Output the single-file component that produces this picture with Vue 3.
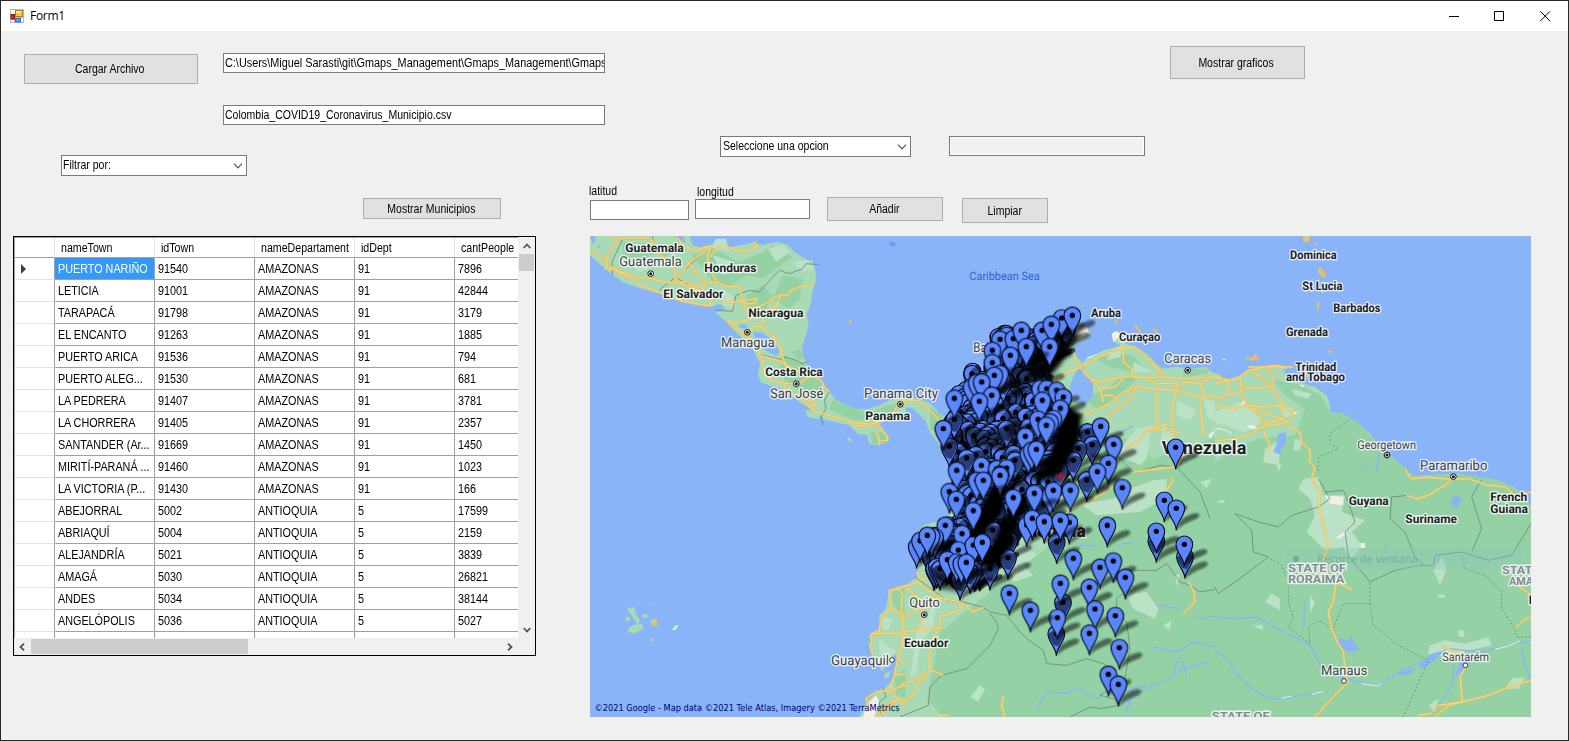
<script setup>
const columns = ['nameTown', 'idTown', 'nameDepartament', 'idDept', 'cantPeople']
const rows = [
  ['PUERTO NARIÑO', '91540', 'AMAZONAS', '91', '7896'],
  ['LETICIA', '91001', 'AMAZONAS', '91', '42844'],
  ['TARAPACÁ', '91798', 'AMAZONAS', '91', '3179'],
  ['EL ENCANTO', '91263', 'AMAZONAS', '91', '1885'],
  ['PUERTO ARICA', '91536', 'AMAZONAS', '91', '794'],
  ['PUERTO ALEG...', '91530', 'AMAZONAS', '91', '681'],
  ['LA PEDRERA', '91407', 'AMAZONAS', '91', '3781'],
  ['LA CHORRERA', '91405', 'AMAZONAS', '91', '2357'],
  ['SANTANDER (Ar...', '91669', 'AMAZONAS', '91', '1450'],
  ['MIRITÍ-PARANÁ ...', '91460', 'AMAZONAS', '91', '1023'],
  ['LA VICTORIA (P...', '91430', 'AMAZONAS', '91', '166'],
  ['ABEJORRAL', '5002', 'ANTIOQUIA', '5', '17599'],
  ['ABRIAQUÍ', '5004', 'ANTIOQUIA', '5', '2159'],
  ['ALEJANDRÍA', '5021', 'ANTIOQUIA', '5', '3839'],
  ['AMAGÁ', '5030', 'ANTIOQUIA', '5', '26821'],
  ['ANDES', '5034', 'ANTIOQUIA', '5', '38144'],
  ['ANGELÓPOLIS', '5036', 'ANTIOQUIA', '5', '5027'],
]

// Map geometry is kept in thirds of a pixel, in three sheets: west, centre, east.
const westRoads = [
  'M12 50L50 80 75 105 105 120 150 135 195 140 240 150 290 155 340 175 375 200 372 222 330 215 280 205 225 182 175 165 130 135 80 112 55 110',
  'M75 12L95 25 80 45 62 75 65 105', 'M95 20H195M195 20L215 60 245 85 265 110 270 150 300 150 330 165 360 155 395 150',
  'M270 12L290 40 325 55 372 42 355 60 310 92 290 120 270 140', 'M372 42L365 75 370 110 395 150 420 162 460 165 470 200 478 235 505 250',
  'M372 75L395 45 435 48 480 60 515 42 505 28', 'M310 95L330 125 360 150 350 175 370 205',
  'M410 210L440 212 475 205 515 200 505 215 475 215', 'M500 230L540 215 560 200 585 188 605 192 615 175 640 165 680 160',
  'M585 190L570 225 530 240 530 270 520 280 495 290 485 310 520 360', 'M425 265L445 275 475 265 495 262 500 230M425 265L445 290 460 295 485 320',
  'M510 283L530 285 550 305 570 320 585 350 590 375', 'M520 360L530 400 540 430 570 450 600 455 640 455 675 430 705 445 715 465 732 480',
  'M525 372L575 385 615 405 650 425M590 375L600 405M595 455V475L640 495 680 535 720 548 765 560 800 572 840 575 870 578',
  'M640 470L660 500 690 515 685 522 660 515', 'M865 570L905 615 905 625 880 628 875 608 868 600M880 628V636', 'M800 572L805 582 840 580 870 572 920 555 935 515 960 513',
]
const westSouthRoads = [
  'M960 1062L940 1068 910 1075 915 1100 912 1130 890 1150 880 1190 880 1205 855 1208 857 1225 852 1240 860 1270', 'M915 1075L940 1070 950 1090 945 1130 955 1160 950 1195 960 1210',
  'M912 1130L935 1140 950 1150', 'M860 1204H950L945 1250 935 1280 925 1330 910 1375', 'M850 1420L840 1400 870 1380 910 1375 960 1360', 'M910 1375L935 1400 910 1430 880 1450M870 1455L890 1425 940 1400 960 1420',
  'M935 1280L960 1295M925 1330L960 1325',
]
const centreRoads = [
  'M0 505L55 505 85 530 118 565', 'M455 455L490 425 540 407 600 372 670 348 705 345 750 385 790 435', 'M520 365L540 405 570 440 600 450 640 440 690 432 735 437 790 435 860 440 930 435 960 432',
  'M670 348L670 390 695 410 700 435M700 435L735 437 770 455 830 455 830 470 815 530 820 600 825 645', 'M545 555L580 535 620 520 670 480 710 462 740 470 830 475 900 495 960 490',
  'M620 555L650 530 690 500 710 462', 'M572 440L600 470 610 510M600 470L645 465 670 440M610 490L640 490 655 510', 'M770 480L770 590 735 600M770 590L820 600 840 600',
  'M700 720L780 710 825 705M825 705L850 670 910 655 960 640', 'M830 475L850 450 900 455 930 440M900 455L915 485 900 520 910 610M770 400L790 435', 'M680 648L715 625 735 600 780 580 810 575',
]
const eastRoads = [
  'M0 435L45 445 75 435 100 415 150 405 235 405M100 405H150L180 400 205 405', 'M0 455L45 445 35 490 0 500M35 490L80 480M75 435L80 480 95 520 125 540 150 575',
  'M0 520L50 530 95 520 150 525 205 518 235 545M95 520L150 545 200 560M75 455L100 470 170 465 200 515 205 560 145 578 150 610 165 640 158 665',
  'M110 420L140 435 165 465M150 405L175 430 175 465M0 625L60 622 110 605 145 580 200 575 225 565 235 535M205 560L225 585 255 600 260 630 285 655 285 690 300 710 290 740 315 780 312 830 325 880 340 940 315 1010 320 1040',
  'M345 1025L375 1055 410 1073M362 1055L355 1110 340 1140 350 1190 365 1225 385 1260 390 1310 398 1350 350 1400 300 1455',
  'M570 710L585 735 590 740 640 735 700 742 760 740 820 760 870 765 900 790 948 780M575 790L605 800 640 790 690 760 715 740',
  'M680 1242L710 1255 750 1270M750 1310L735 1330 742 1410 700 1420 660 1455M948 1345L880 1365 820 1390 742 1410 670 1420 645 1445 610 1450M900 1190L925 1165 948 1155M890 1050L915 1065 948 1088',
]
const colombiaRoads = [
  'M500 834L540 820 600 790 640 765', 'M800 775L820 745 810 735', 'M18 1062L50 1050 85 1075 130 1100 180 1110 220 1140 250 1126', 'M180 1110V1135L120 1155 120 1185',
  'M50 1020L60 1042 100 1040', 'M0 1165L20 1150 60 1130 90 1100 130 1100M10 1060L60 1100 70 1150 60 1200M0 1200L60 1195 120 1185 95 1225 85 1310 130 1330',
  'M85 1330L55 1350 40 1390 0 1415M0 1360L40 1345 85 1320', 'M310 1392L305 1420 315 1455M115 1450H145', 'M867 1050L882 1080 885 1110 850 1145',
]
const centreBorders = [
  'M655 675L700 720M710 720L780 700 830 705 900 780 930 860', 'M45 1035L100 1075 140 1105 190 1110 250 1126 270 1140 320 1150 360 1200 380 1220 430 1255 440 1295 500 1300 560 1280 610 1295 670 1340',
  'M270 1145L290 1170 295 1190 270 1240 200 1310 125 1330 90 1365 85 1420 0 1455', 'M678 1015H770L800 995 840 1050 870 1060 900 1080 960 1070', 'M650 1100L660 1090 710 1070 690 1060M650 1100V1140L680 1170 690 1250 675 1340 600 1390 640 1400 660 1420 600 1430 570 1425 510 1455',
]
const eastBorders = [
  'M60 845L130 870 190 885 230 850 310 825 345 800 310 740M60 845L110 895 115 960 160 975 60 1050 10 1085 0 1065', 'M330 780L385 775 400 810 420 870 390 900 400 970 465 1050 540 1015 610 1000 655 1000 660 970 740 960 820 985 890 970 948 875',
  'M580 790L530 795 525 860 570 900 600 975 625 1000', 'M800 742L770 795 800 890 770 960',
]
const eastDashes = [
  'M400 565L345 605 345 635 370 650 310 675 310 720', 'M165 980L200 1000 220 1050 220 1110 235 1160 220 1185 285 1235 280 1185 310 1165 355 1190 385 1115H465V1050', 'M465 1115L475 1180 550 1240 640 1285 565 1455',
  'M740 970L750 1010 810 1030 860 1080 860 1130 900 1190 905 1215 948 1215',
]
const rivers = [
  'M0 1155L60 1160 120 1155 170 1180 240 1215 285 1240 320 1310 390 1340 430 1350 490 1360 560 1315 620 1290 700 1250 800 1260 880 1240 948 1225',
  'M0 1255L35 1280 60 1320 110 1370 165 1400 215 1400 260 1390 325 1380', 'M720 1275L710 1360 665 1430M920 1250L930 1300 948 1345', 'M270 1110L265 1190M510 965L515 940M485 720L492 660M440 710L475 690',
]

const westLabels = [
  ['Guatemala', 118, 60, 175, 1], ['Guatemala', 100, 102, 187, 0], ['Honduras', 355, 120, 156, 1], ['El Salvador', 232, 198, 180, 1],
  ['Nicaragua', 487, 255, 165, 1], ['Managua', 405, 346, 161, 0], ['Costa Rica', 538, 432, 172, 1], ['San José', 552, 499, 160, 0],
  ['Panama City', 834, 499, 222, 0], ['Panama', 838, 564, 134, 1], ['Guayaquil', 735, 1299, 174, 0],
]
const centreLabels = [
  ['Aruba', 573, 254, 90, 1], ['Curaçao', 657, 326, 124, 1], ['Caracas', 793, 394, 140, 0], ['Ba', 220, 361, 40, 0],
  ['Quito', 28, 1125, 92, 0], ['Ecuador', 12, 1244, 133, 1],
]
const eastLabels = [
  ['Dominica', 225, 80, 140, 1], ['St Lucia', 262, 173, 120, 1], ['Barbados', 355, 239, 141, 1], ['Grenada', 213, 311, 126, 1],
  ['Trinidad', 241, 416, 123, 1], ['and Tobago', 213, 446, 177, 1], ['Georgetown', 427, 650, 176, 2], ['Paramaribo', 615, 715, 202, 0],
  ['Guyana', 401, 819, 120, 1], ['Suriname', 571, 873, 155, 1], ['French', 826, 807, 111, 1], ['Guiana', 826, 843, 113, 1],
  ['Manaus', 318, 1330, 139, 0], ['Santarém', 682, 1286, 140, 2],
]
const stateLabels = [
  ['STATE OF', 219, 1019, 174], ['RORAIMA', 219, 1053, 169], ['STATE OF', -10, 1464, 174], ['STATE', 861, 1027, 112], ['AMAPÁ', 882, 1059, 112],
]
const labelClass = (kind) => ['city', 'country', 'town'][kind]

const northernPins = [
  [485, 258], [517, 250], [320, 310], [300, 322], [340, 320], [364, 295], [426, 295], [454, 277], [277, 355], [449, 344], [331, 370],
  [379, 344], [277, 392], [300, 425], [283, 430], [215, 465], [230, 452], [245, 450], [163, 499], [275, 490], [238, 508],
  [420, 470], [440, 470], [470, 475], [490, 495], [427, 505], [130, 590], [481, 529], [414, 562], [460, 560], [450, 570], [439, 580],
  [376, 613], [385, 665], [395, 655], [409, 652], [244, 700],
  [290, 710], [320, 708], [302, 727], [602, 583], [641, 637], [625, 694], [592, 719], [827, 646],
]
const shadedPins = [
  [502, 287], [425, 410], [310, 450], [163, 562], [386, 585], [320, 590], [148, 643], [228, 668], [200, 678], [340, 665], [345, 685],
  [562, 600], [577, 638], [535, 650], [520, 685], [478, 715], [560, 744], [431, 815], [152, 937], [278, 894], [327, 925], [324, 977],
  [110, 1004], [120, 1010], [270, 1010], [210, 1020], [180, 1040], [470, 930], [769, 926], [855, 974], [489, 1111], [469, 1205],
]
const southernPins = [
  [170, 715], [230, 745], [300, 730], [250, 745], [148, 779], [169, 802], [220, 836], [340, 797], [450, 789], [460, 775], [403, 784],
  [511, 775], [667, 767], [136, 880], [186, 905], [50, 944], [60, 926], [105, 915], [95, 912], [82, 910], [175, 954],
  [220, 939], [247, 931], [380, 879], [397, 859], [433, 869], [508, 871], [481, 865],
  [142, 983], [170, 990], [184, 995], [199, 991], [793, 805], [829, 829], [622, 880],
  [769, 898], [853, 937], [520, 979], [600, 1006], [640, 987], [676, 1036], [481, 1054], [568, 1066], [585, 1131], [646, 1151],
  [472, 1157], [568, 1204], [658, 1247], [625, 1327], [655, 1357], [328, 1084], [391, 1135],
]

// Repeatable scatter for the densely populated band, row by row.
const bands = [
  [320, 295, 460], [350, 275, 440], [400, 265, 400], [440, 210, 400], [490, 170, 450], [540, 165, 460], [590, 150, 450], [640, 155, 470],
  [690, 165, 480], [735, 175, 450], [780, 180, 430], [830, 185, 370], [880, 140, 320], [930, 70, 300], [960, 60, 290], [995, 100, 240],
]
let seed = 41
const random = () => (seed = (seed * 16807) % 2147483647) / 2147483647
const densePins = bands.flatMap(([y, from, to]) =>
  Array.from({ length: Math.round((to - from) / 12) }, () => [
    Math.round(from + random() * (to - from)), Math.round(y + random() * 44 - 22),
  ]))
densePins.sort((a, b) => a[1] - b[1])
</script>

<template>
  <div class="window">
    <header class="titlebar">
      <svg class="app-icon" width="14" height="14" viewBox="0 0 14 14">
        <rect width="14" height="14" fill="#b9bcc0" />
        <path d="M1 1h4v4H1zM1 11h3v2H1zM11 9h2v4h-2z" fill="#fff" />
        <rect x="5.5" y="1.5" width="7" height="6" fill="#f7c62f" stroke="#b87b16" />
        <rect x="6" y="2" width="5" height="2" fill="#ffe88a" />
        <rect x="1" y="5.5" width="3.5" height="4.5" fill="#d02c26" stroke="#951313" />
        <rect x="5.5" y="9.5" width="5" height="3.5" fill="#5d9cf5" stroke="#2e6fd4" />
      </svg>
      <span class="title">Form1</span>
      <div class="window-buttons">
        <svg width="11" height="11" viewBox="0 0 11 11"><path d="M0 5.5h10" /></svg>
        <svg width="11" height="11" viewBox="0 0 11 11"><path d="M.5 .5h9v9h-9z" /></svg>
        <svg width="11" height="11" viewBox="0 0 11 11"><path d="M.3 .3l9.7 9.7M10 .3L.3 10" /></svg>
      </div>
    </header>

    <section class="files">
      <button class="btn load"><span class="sq">Cargar Archivo</span></button>
      <div class="paths">
        <div class="field"><span class="sq folder">C:\Users\Miguel Sarasti\git\Gmaps_Management\Gmaps_Management\Gmaps</span></div>
        <div class="field"><span class="sq">Colombia_COVID19_Coronavirus_Municipio.csv</span></div>
      </div>
      <button class="btn charts"><span class="sq">Mostrar graficos</span></button>
    </section>

    <main class="panels">
      <section class="left">
        <div class="select filter"><span class="sq">Filtrar por:</span><svg width="10" height="6" viewBox="0 0 10 6"><path d="M1 .7L5 4.800 9 .7" /></svg></div>
        <button class="btn towns"><span class="sq">Mostrar Municipios</span></button>
        <div class="grid">
          <div class="sheet">
            <div class="row head">
              <div class="stub"></div>
              <div v-for="c in columns" :key="c" class="cell"><span class="sq">{{ c }}</span></div>
            </div>
            <div v-for="(r, i) in rows" :key="r[1]" class="row">
              <div class="stub"><svg v-if="i === 0" width="5" height="10" viewBox="0 0 5 10"><path d="M0 0l5 5-5 5z" fill="#404040" /></svg></div>
              <div v-for="(v, j) in r" :key="j" class="cell" :class="{ selected: i === 0 && j === 0 }"><span class="sq">{{ v }}</span></div>
            </div>
            <div class="row"><div class="stub"></div><div v-for="c in columns" :key="c" class="cell"></div></div>
          </div>
          <div class="vbar">
            <svg width="8" height="6" viewBox="0 0 8 6"><path d="M.7 5L4 1.5 7.3 5" /></svg>
            <div class="vthumb"></div>
            <svg class="end" width="8" height="6" viewBox="0 0 8 6"><path d="M.7 1L4 4.5 7.3 1" /></svg>
          </div>
          <div class="hbar">
            <svg width="6" height="8" viewBox="0 0 6 8"><path d="M5 .7L1.5 4 5 7.3" /></svg>
            <div class="hthumb"></div>
            <svg class="end" width="6" height="8" viewBox="0 0 6 8"><path d="M1 .7L4.5 4 1 7.3" /></svg>
          </div>
        </div>
      </section>

      <section class="right">
        <div class="options">
          <div class="select option"><span class="sq">Seleccione una opcion</span><svg width="10" height="6" viewBox="0 0 10 6"><path d="M1 .7L5 4.800 9 .7" /></svg></div>
          <div class="field disabled"></div>
        </div>
        <div class="coords">
          <label class="coord lat"><span class="sq">latitud</span><span class="field"></span></label>
          <label class="coord lon"><span class="sq">longitud</span><span class="field"></span></label>
          <button class="btn add"><span class="sq">Añadir</span></button>
          <button class="btn clear"><span class="sq">Limpiar</span></button>
        </div>

        <svg class="map" width="941" height="481" viewBox="590 236 941 481">
          <defs>
            <filter id="soft" x="-30%" y="-30%" width="160%" height="160%"><feGaussianBlur stdDeviation="3.500" /></filter>
            <g id="pin">
              <path d="M0 66C2 55 9 43 14 35 34 20 50 13 64 15 75 21 67 31 50 36 34 42 17 50 0 66Z" fill="#000" opacity=".52" filter="url(#soft)" />
              <path d="M0 66C-1 40 -25 25 -25 0A25 25 0 0 1 25 0C25 25 1 40 0 66Z" fill="#5a86ff" stroke="#080c18" stroke-width="3.4" />
              <circle r="8" fill="#000" />
            </g>
            <g id="shaded-pin">
              <path d="M0 66C2 55 9 43 14 35 34 20 50 13 64 15 75 21 67 31 50 36 34 42 17 50 0 66Z" fill="#000" opacity=".5" filter="url(#soft)" />
              <path d="M0 66C-1 40 -25 25 -25 0A25 25 0 0 1 25 0C25 25 1 40 0 66Z" fill="#5a86ff" stroke="#080c18" stroke-width="3.4" />
              <path d="M-24 2C-10 -12 8 -20 24 -8 26 8 12 24 6 38L-8 34C-14 24 -22 14 -24 2Z" fill="#101a3c" opacity=".68" />
              <circle r="8" fill="#000" />
            </g>
            <g id="dense-pin">
              <path d="M0 66C2 55 9 43 14 35 34 20 50 13 64 15 75 21 67 31 50 36 34 42 17 50 0 66Z" fill="#000" opacity=".62" />
              <path d="M0 66C-1 40 -25 25 -25 0A25 25 0 0 1 25 0C25 25 1 40 0 66Z" fill="#2e4996" stroke="#03050d" stroke-width="4" />
              <path d="M-22 -8A24 24 0 0 1 12 -21C-4 -18 -12 2 -10 22 -18 12 -22 4 -22 -8Z" fill="#5a86ff" />
              <circle r="8" fill="#000" />
            </g>
            <g id="capital"><circle r="8.5" fill="#fff" stroke="#111" stroke-width="3" /><circle r="4.500" fill="#111" /></g>
            <g id="place"><circle r="7" fill="#fff" stroke="#333" stroke-width="3" /></g>
          </defs>
          <rect x="590" y="236" width="941" height="481" fill="#8ab4f8" />

          <g transform="translate(586 232) scale(.333333)">
            <path class="land" d="M12 12H262L285 25 300 35 290 12H310L320 40 345 46 375 37 400 48 450 42 500 32 530 39 575 30 605 38 625 60 665 85 680 85 690 125 688 155 680 175 675 215 662 250 668 280 658 315 648 345 652 375 662 395 690 430 715 465 735 485 750 505 775 515 800 530 840 532 880 520 905 508 960 490V545L915 560 880 575 905 610 908 625 880 640 850 636 845 610 815 605 790 580 720 565 700 550 700 562 665 555 658 535 680 535 640 510 600 480 570 465 525 452 515 425 523 395 512 375 500 350 470 320 440 290 420 270 388 240 405 236 420 235 402 215 375 225 330 220 280 208 220 185 160 168 110 150 75 125 40 95 12 70Z" />
            <path class="dark" d="M110 30L260 40 240 75 210 60 160 90 110 70ZM315 70L380 50 460 90 530 60 560 40 620 75 570 110 530 140 480 130 430 165 380 150 350 110ZM590 130L650 140 640 200 610 230 560 200ZM480 190L530 160 560 190 530 250 490 235ZM590 370L660 395 720 470 690 500 630 470 580 430ZM640 350L655 370 640 385 615 360ZM740 505L850 545 900 520 940 515 920 560 800 565 730 530ZM850 600H900V635H860Z" />
            <path class="pale" d="M545 50L590 38 610 60 570 90ZM620 90L665 85 685 110 650 120ZM130 95L170 80 190 110 160 120ZM380 70L430 85 460 110 410 130ZM405 170L440 190 450 225 410 220ZM230 35L255 60 210 55ZM420 20L390 20 375 45 430 60Z" />
            <path class="water" d="M500 300L530 302 560 325 582 360 570 372 530 350 510 325ZM460 275L485 280 480 292 460 285ZM12 12H28V28L20 35ZM35 35L45 45 38 50Z" />
            <path d="M910 30L932 34 925 42 912 43Z" fill="#669df6" />
            <path class="land" d="M785 615L795 620 798 632 785 625ZM125 1128L145 1125 148 1145 130 1145ZM133 1143L148 1143 162 1165 157 1178 145 1165ZM125 1190L145 1178 170 1175 172 1192 145 1205 128 1200ZM170 1147H185V1157H170ZM118 1155H132V1167H118ZM194 1218H201V1227H194ZM193 1110H198V1114H193ZM192 1165L210 1160 215 1182 200 1180Z" />
            <path d="M258 1195L268 1180 278 1180 268 1194Z" fill="#d4eed9" />
            <path class="land" d="M962 1058L935 1064 908 1075 905 1100 900 1130 880 1150 880 1190 850 1205 855 1240 862 1280 890 1318 915 1305 930 1285 920 1345 900 1365 870 1380 840 1410 820 1455H962Z" />
            <path class="dark" d="M910 1085L955 1065V1150L930 1130ZM925 1330L960 1310V1400L930 1390Z" />
            <path class="pale" d="M890 1155L920 1160 910 1190 890 1195ZM880 1220L930 1260 910 1280 880 1265Z" />
            <path d="M830 1455L845 1415 870 1390 880 1410 865 1455Z" fill="#f4f0e6" />
            <path class="water" d="M925 1265L938 1285 925 1320 905 1350 890 1365 900 1330 890 1310 915 1300Z" /><path class="land" d="M895 1325L912 1318 910 1335 895 1340Z" />
            <path class="border" d="M200 12V22H110L78 90 80 130M375 40L290 120 225 170 220 180M275 140L310 160 350 180 375 195M390 235L440 238 450 190 490 175 520 180 555 140 580 115 610 125 650 110 660 95 698 98M520 368L585 382 600 375 630 385 650 395 662 390M732 475L715 505 720 530 705 555 712 580M890 1365L900 1395 880 1410 885 1450" />
          </g>

          <g transform="translate(900 232) scale(.333333)">
            <path class="land" d="M0 490L40 498 85 510 120 545 150 565 180 500 260 400 290 335 400 315 520 265 560 285 572 300 570 312 545 326 520 345 522 360 545 392 565 380 600 360 650 345 662 340 640 330 635 305 650 297 665 310 680 335 705 343 740 365 770 395 785 410 830 405 870 410 920 405 935 420 965 432V1455H16V1059L45 1040 55 1030 52 1005 38 940 35 920 70 880 140 860 165 800 150 735 140 680 120 640 90 600 75 565 40 530 0 520Z" />
            <path class="dark" d="M500 440L515 530 580 580 700 630 760 680 965 610V1455H130L80 1400 120 1200 220 1120 500 900ZM90 525L130 555 120 610 90 590ZM590 380L640 365 700 370 740 420 690 420 630 405ZM550 500L620 470 670 430 710 440 650 500 590 530ZM850 410L930 410 920 425 850 435Z" />
            <path class="pale" d="M640 350L670 340 660 375 620 385ZM700 390L760 420 700 420ZM710 590L755 580 740 680 720 700 650 670 670 640ZM790 580L830 620 820 660 780 640ZM830 505L890 535 870 565 830 550ZM910 500L960 510 940 570 920 550ZM540 815L640 800 690 770 760 745 800 740 800 795 720 840 590 850ZM310 945L380 940 410 970 370 1000 400 1030 340 1050 320 1020ZM680 1090L740 1080 775 1130 765 1160 700 1130ZM790 1180L815 1165 808 1195ZM210 1395L240 1360 255 1370 235 1410ZM50 1195L110 1100 100 1180 60 1240 50 1320 30 1340ZM900 750L935 740 920 770ZM825 1030L840 1025 830 1065Z" />
            <path class="water" d="M540 402L552 402 548 425 562 435 580 455 578 495 548 522 525 507 508 465 520 435Z" />
            <path class="sand" d="M635 305L650 297 662 310 640 330ZM650 345L610 358 555 385 565 375ZM530 285L560 285 568 305 530 325ZM925 610L950 590 930 620Z" />
            <path class="road" d="M705 282L722 300M760 290L772 302M648 265L652 275" />
            <path class="river" d="M590 600L650 610 700 580M540 940H590M650 940L700 930M700 1365L680 1440M410 1430L440 1380 500 1385 530 1365 570 1390 600 1400M660 1420L740 1370 790 1350 850 1310 930 1290M640 1385L740 1360M760 1245L830 1260 880 1230 960 1250M820 1320L830 1290 850 1290 860 1330M690 1420L690 1390M770 1120L840 1130M890 1160L960 1150" />
            <path v-for="d in centreBorders" :key="d" class="border" :d="d" />
            <template v-for="d in centreRoads.concat(colombiaRoads)" :key="d"><path class="road" :d="d" /><path class="road-core" :d="d" /></template>
          </g>
          <g transform="translate(586 232) scale(.333333)">
            <template v-for="d in westRoads.concat(westSouthRoads)" :key="d"><path class="road" :d="d" /><path class="road-core" :d="d" /></template>
            <path class="road" d="M793 265V276M198 1182L210 1165 210 1180" />
          </g>

          <g transform="translate(1215 232) scale(.333333)">
            <path class="land" d="M0 434L45 442 75 430 100 413 150 405 235 402 205 415 215 428 245 448 280 460 300 465 335 490 345 520 345 540 385 545 400 560 430 572 465 605 490 640 520 665 550 690 580 720 595 732 680 727 735 725 800 738 850 744 900 769 930 789 948 825V1455H0Z" />
            <path class="dark" d="M175 445L265 458 320 495 345 540 385 545 430 572 490 640 550 690 595 732 735 725 850 744 930 789 948 825V1455H0V690L60 650 130 620 240 610 270 530 210 490Z" />
            <path class="pale" d="M0 540L75 510 110 530 140 570 90 600 0 570ZM180 515L235 530 215 560ZM230 470L290 485 280 500 240 490ZM150 650L200 620 190 700 145 690ZM240 620L260 625 255 655 235 655ZM265 740L310 735 325 790 390 790 380 840 450 865 410 900 440 940 410 985 385 945 330 955 275 900 300 850 285 800 250 770ZM170 1085L195 1100 195 1135 150 1110ZM680 975L695 1010 675 1060 655 1015ZM645 1240L690 1225 750 1235 820 1215 830 1240 740 1260 690 1275 640 1265ZM890 1340L930 1335 910 1370 870 1370ZM180 680L200 700 190 720ZM640 1420L670 1400 660 1440ZM730 1195H748V1215H730ZM670 1088H690V1097H670ZM110 1180L145 1180 140 1193ZM10 805H28V812H10ZM285 1090L300 1110 285 1145Z" />
            <path class="sand" d="M85 505L93 515 78 518ZM230 540L250 540 235 548ZM330 790L385 795 385 820 345 815ZM95 580L115 580 130 590 105 590ZM437 933H450V948H437ZM365 915L395 895 390 910 368 922ZM20 380L32 382 30 386ZM250 455L270 462 262 466Z" />
            <path class="water" d="M190 605L215 600 210 640 195 655 200 670 175 660 185 635ZM708 800L720 793 742 797 725 830 710 820ZM375 1218L400 1225 410 1210 415 1230 435 1255 400 1260 365 1235ZM610 1300L650 1265 690 1255 660 1285 625 1310ZM550 1320L600 1310 590 1325 550 1330ZM735 1290L770 1265 800 1275 750 1300 735 1330 720 1330ZM665 975L675 970 670 995Z" />
            <path v-for="d in rivers" :key="d" class="river" :d="d" />
            <path d="M0 590Q30 590 50 605M200 1400L230 1392M290 1387L325 1378M440 1355L490 1362 500 1352M840 1252L880 1242 915 1227" fill="none" stroke="#e5f2ea" stroke-width="3" />
            <path v-for="d in eastBorders" :key="d" class="border" :d="d" />
            <path v-for="d in eastDashes" :key="d" class="border dashed" :d="d" />
            <template v-for="d in eastRoads" :key="d"><path class="road" :d="d" /><path class="road-core" :d="d" /></template>
            <path class="land" d="M265 12H285V25L270 28ZM308 108L322 112 325 130 312 125ZM316 176L326 178 324 185ZM305 215L312 212 310 230ZM290 400L320 388 315 400Z" />
            <path class="road" d="M267 12L268 26 280 26 283 13M297 33L306 36M315 110L330 125 328 135 318 126ZM312 212L308 230M340 360L352 357M92 377L112 380 120 370 128 378 110 383M270 437L280 432" />
          </g>

          <g transform="translate(586 232) scale(.333333)">
            <text v-for="l in westLabels" :key="l[0] + l[2]" :class="labelClass(l[4])" :x="l[1]" :y="l[2]" :textLength="l[3]" lengthAdjust="spacingAndGlyphs">{{ l[0] }}</text>
            <use href="#capital" x="194" y="125" /><use href="#capital" x="484" y="301" /><use href="#capital" x="631" y="455" /><use href="#capital" x="943" y="517" /><use href="#place" x="918" y="1284" />
          </g>
          <g transform="translate(1215 232) scale(.333333)">
            <g class="ghost">
              <rect x="210" y="948" width="715" height="66" fill="#8ec6bd" opacity=".35" />
              <circle cx="243" cy="981" r="9" fill="#6baf89" />
              <text x="306" y="992" textLength="302" lengthAdjust="spacingAndGlyphs">Recorte de ventana</text>
            </g>
            <text v-for="l in eastLabels" :key="l[0]" :class="labelClass(l[4])" :x="l[1]" :y="l[2]" :textLength="l[3]" lengthAdjust="spacingAndGlyphs">{{ l[0] }}</text>
            <text v-for="l in stateLabels" :key="l[0] + l[1]" class="state" :x="l[1]" :y="l[2]" :textLength="l[3]" lengthAdjust="spacingAndGlyphs">{{ l[0] }}</text>
            <text class="country" x="941" y="1115">M</text>
            <use href="#capital" x="516" y="669" /><use href="#capital" x="715" y="734" /><use href="#place" x="387" y="1347" /><use href="#place" x="751" y="1300" />
          </g>
          <g transform="translate(900 232) scale(.333333)">
            <text v-for="l in centreLabels" :key="l[0]" :class="labelClass(l[4])" :x="l[1]" :y="l[2]" :textLength="l[3]" lengthAdjust="spacingAndGlyphs">{{ l[0] }}</text>
            <text class="sea" x="208" y="143" textLength="211" lengthAdjust="spacingAndGlyphs">Caribbean Sea</text>
            <text class="nation" x="785" y="667" textLength="254" lengthAdjust="spacingAndGlyphs">Venezuela</text>
            <text class="nation" x="335" y="914" textLength="222" lengthAdjust="spacingAndGlyphs">Colombia</text>
            <use href="#capital" x="863" y="415" /><use href="#capital" x="73" y="1148" />

            <path class="mass" d="M300 320L450 300 510 290 480 370 440 440 490 500 530 560 520 720 460 780 390 870 340 960 250 1060 160 1070 80 980 130 930 190 870 185 760 155 690 155 600 190 500 280 400Z" />
            <use v-for="(p, i) in densePins" :key="i" href="#dense-pin" :x="p[0]" :y="p[1]" />
            <use v-for="(p, i) in shadedPins" :key="'d' + i" href="#shaded-pin" :x="p[0]" :y="p[1]" />
            <g class="gloom">
              <path d="M545 300L505 355 480 400 440 445 395 440 380 400 405 350 470 345 510 310Z" opacity=".93" />
              <path d="M500 520L540 545 545 610 500 700 470 730 420 750 390 735 450 680 455 640 490 580Z" />
              <path d="M290 755L320 770 310 840 255 900 235 970 215 940 205 880 250 810Z" />
              <path d="M390 775L380 840 340 870 345 930 280 1010 235 1000 290 910 310 860 350 800Z" />
              <path d="M120 910L170 920 150 960 80 955ZM90 1010L200 1050 180 1080 120 1070ZM330 530L370 580 350 640 320 610ZM180 590L300 600 330 660 220 640ZM330 420L380 400 400 440 360 500 330 480Z" opacity=".6" />
            </g>
            <use v-for="(p, i) in northernPins" :key="'n' + i" href="#pin" :x="p[0]" :y="p[1]" />
            <use v-for="(p, i) in southernPins" :key="'s' + i" href="#pin" :x="p[0]" :y="p[1]" />
            <path d="M481 719V748M466 733.500H496" stroke="#f00" stroke-width="3.500" />
          </g>
          <text class="credit" x="594.500" y="711" textLength="305" lengthAdjust="spacingAndGlyphs">©2021 Google - Map data ©2021 Tele Atlas, Imagery ©2021 TerraMetrics</text>
        </svg>
      </section>
    </main>
  </div>
</template>

<style>
html, body { overflow: hidden; }
</style>

<style scoped>
.window { box-sizing: border-box; width: 1569px; height: 741px; border: 1px solid #2a2829; background: #f0f0f0; font: 12px/14px "Liberation Sans", sans-serif; color: #000; overflow: hidden; }
.titlebar { height: 30px; background: #fff; display: flex; align-items: center; padding-left: 9px; }
.title { margin-left: 6px; font: 12px/16px "Open Sans", sans-serif; letter-spacing: -.3px; }
.window-buttons { margin-left: auto; margin-right: 17px; display: flex; gap: 34px; }
.window-buttons svg { fill: none; stroke: #000; stroke-width: 1; }
.window-buttons svg:last-child { margin-left: 1px; }
.sq { display: inline-block; white-space: nowrap; transform: scaleX(.875); transform-origin: left center; }
.sq.folder { transform: scaleX(.905); }
.btn { box-sizing: border-box; padding: 0; border: 1px solid #adadad; background: #e1e1e1; font: inherit; color: inherit; display: flex; align-items: center; justify-content: center; flex: none; }
.btn .sq { transform-origin: center; }
.field { box-sizing: border-box; display: block; height: 20px; border: 1px solid #7a7a7a; background: #fff; padding: 2px 1px 0; flex: none; overflow: hidden; }
.select { box-sizing: border-box; height: 21px; border: 1px solid #7a7a7a; background: #fff; display: flex; align-items: center; justify-content: space-between; padding: 0 3px 1px 2px; flex: none; }
.select svg { fill: none; stroke: #555; stroke-width: 1.200; margin-top: 1px; }
.files { display: flex; align-items: flex-start; height: 99px; padding: 15px 0 0 23px; box-sizing: border-box; }
.load { width: 174px; height: 30px; margin-top: 8px; padding-right: 3px; }
.paths { width: 382px; margin: 7px 0 0 25px; display: flex; flex-direction: column; gap: 32px; }
.charts { width: 135px; height: 33px; margin-left: 565px; padding-right: 2px; }
.panels { display: flex; align-items: flex-start; }
.left { width: 589px; flex: none; }
.filter { width: 186px; margin: 25px 0 0 60px; padding-left: 1px; }
.towns { width: 138px; height: 21px; margin: 22px 0 0 362px; padding-right: 2px; }

.grid { box-sizing: border-box; width: 523px; height: 420px; margin: 17px 0 0 12px; border: 1px solid #000; background: #f0f0f0; display: grid; grid-template-columns: 504px 17px; grid-template-rows: 401px 17px; }
.sheet { overflow: hidden; background: #fff; border-top: 1px solid #a0a0a0; border-left: 1px solid #a0a0a0; box-sizing: border-box; }
.row { display: grid; grid-template-columns: 40px repeat(5, 100px); height: 22px; }
.row.head { height: 20px; }
.stub { border-right: 1px solid #a0a0a0; border-bottom: 1px solid #e3e3e3; display: flex; align-items: center; padding-left: 6px; }
.cell { border-right: 1px solid #a0a0a0; border-bottom: 1px solid #a0a0a0; display: flex; align-items: center; padding-left: 3px; overflow: hidden; }
.cell .sq { transform: scaleX(.9); }
.head .cell { border-right-color: #e3e3e3; padding-left: 6px; }
.head .stub { border-right-color: #e3e3e3; border-bottom-color: #a0a0a0; }
.head .sq { transform: scaleX(.885); }
.cell.selected { background: #3399ff; color: #fff; }
.vbar { display: flex; flex-direction: column; align-items: center; padding: 6px 0 5px; }
.vthumb { width: 15px; height: 17px; margin-top: 5px; background: #cdcdcd; }
.vbar svg, .hbar svg { fill: none; stroke: #505050; stroke-width: 1.800; flex: none; }
.vbar .end { margin-top: auto; }
.hbar { display: flex; align-items: center; padding: 0 5px; }
.hthumb { width: 217px; height: 15px; margin-left: 6px; background: #cdcdcd; }
.hbar .end { margin-left: auto; }

.options { display: flex; margin: 6px 0 0 130px; }
.option { width: 191px; }
.disabled { width: 196px; margin-left: 38px; background: #f0f0f0; border-color: #7a7a7a; box-shadow: inset 0 0 0 1px #fff; }
.coords { display: flex; align-items: flex-start; height: 39px; margin-top: 27px; }
.coord { display: flex; flex-direction: column; }
.coord .sq { height: 14px; }
.lat { width: 99px; gap: 2px; }
.lat .sq { margin-left: -1px; }
.lon { width: 115px; margin: 1px 0 0 6px; }
.lon .sq { margin-left: 2px; }
.add { width: 116px; height: 24px; margin: 13px 0 0 17px; padding-right: 2px; }
.clear { width: 86px; height: 25px; margin: 14px 0 0 19px; }
.map { display: block; margin-top: 13px; }

.land { fill: #a8dab5; }
.dark { fill: #94d2a5; }
.pale { fill: #bbe2c6; }
.water { fill: #8ab4f8; }
.sand { fill: #f3f0e6; }
.road { fill: none; stroke: #f3bd50; stroke-width: 6; stroke-linejoin: round; }
.road-core { fill: none; stroke: #ffe69a; stroke-width: 2; stroke-linejoin: round; }
.border { fill: none; stroke: #71887a; stroke-width: 2.500; }
.dashed { stroke-dasharray: 6 6; }
.river { fill: none; stroke: #8ab4f8; stroke-width: 4; }
.mass { fill: #0b1128; }
.gloom { fill: #000; filter: blur(6px); }
.map text { font-family: Roboto, sans-serif; text-rendering: geometricPrecision; paint-order: stroke; stroke: #fff; stroke-opacity: .8; stroke-width: 8px; stroke-linejoin: round; fill: #202124; }
.map .city { font-size: 41px; fill: #3c4043; }
.map .country { font-size: 36px; font-weight: 700; }
.map .town { font-size: 36px; fill: #3c4043; }
.map .state { font-size: 34px; font-weight: 700; fill: #7f8b91; }
.map .nation { font-size: 55px; font-weight: 700; }
.map .sea { font-size: 35px; fill: #2a67c9; stroke: none; }
.map .ghost text { font: 34px "Open Sans", sans-serif; fill: #65a083; opacity: .65; stroke: none; }
.map .credit { font: 9.500px "DejaVu Sans", sans-serif; fill: #000080; stroke: none; }
</style>
